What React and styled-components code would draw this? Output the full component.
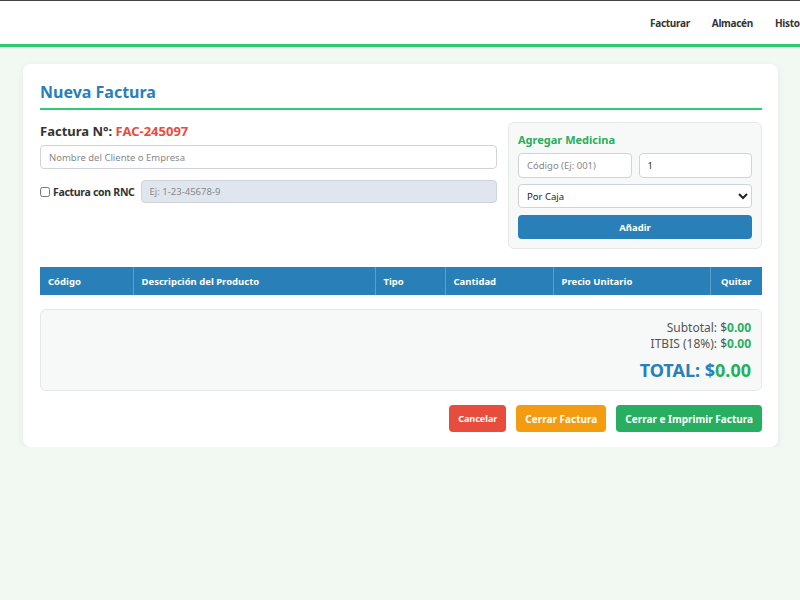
import React from "react";
import styled, { createGlobalStyle } from "styled-components";

const GlobalStyle = createGlobalStyle`
  * { box-sizing: border-box; }
  body {
    margin: 0;
    background: #f2f8f2;
    font-family: "Noto Sans", "Open Sans", sans-serif;
    color: #333;
    overflow-x: hidden;
  }
`;

const Header = styled.header`
  height: 47px;
  background: #fff;
  border-top: 1px solid #444;
  border-bottom: 3px solid #2ecc71;
  display: flex;
  align-items: center;
  overflow: hidden;
`;

const Brand = styled.div`
  flex: 0 0 639px;
`;

const Nav = styled.nav`
  display: flex;
  flex-shrink: 0;
`;

const NavLink = styled.a`
  font-size: 10px;
  font-weight: 700;
  letter-spacing: -0.3px;
  color: #333;
  padding: 0 11px;
  white-space: nowrap;
  text-decoration: none;
`;

const Card = styled.main`
  margin: 17px 22px 0 23px;
  background: #fff;
  border-radius: 8px;
  box-shadow: 0 2px 8px rgba(0, 0, 0, 0.06);
  padding: 17px 16px 15px 17px;
`;

const Title = styled.h2`
  margin: 0;
  color: #2980b9;
  font-size: 16px;
  font-weight: 700;
  padding-bottom: 5px;
  border-bottom: 2px solid #2ecc71;
`;

const TopGrid = styled.div`
  display: grid;
  grid-template-columns: 457px 1fr;
  gap: 11px;
  margin-top: 12px;
`;

const LeftCol = styled.div`
  display: flex;
  flex-direction: column;
`;

const InvoiceNo = styled.div`
  font-size: 13px;
  font-weight: 700;
  color: #333;
  span {
    color: #e74c3c;
  }
`;

const TextInput = styled.input`
  width: 100%;
  height: ${(p) => p.$h || 24}px;
  border: 1px solid #d0d4d8;
  border-radius: 4px;
  padding: 0 8px;
  font-family: inherit;
  font-size: 9.5px;
  color: #333;
  background: ${(p) => (p.disabled ? "#dfe6ee" : "#fff")};
  &::placeholder {
    color: #888;
  }
`;

const ClientInput = styled(TextInput)`
  margin-top: 5px;
`;

const RncRow = styled.div`
  display: flex;
  align-items: center;
  gap: 6px;
  margin-top: 11px;
`;

const CheckLabel = styled.label`
  display: flex;
  align-items: center;
  gap: 3px;
  font-size: 10.5px;
  font-weight: 700;
  white-space: nowrap;
  letter-spacing: -0.3px;
  input {
    margin: 0;
    width: 10px;
    height: 10px;
  }
`;

const Panel = styled.section`
  background: #f7f9f8;
  border: 1px solid #e4e9e6;
  border-radius: 6px;
  padding: 9px 9px 9px 9px;
  display: flex;
  flex-direction: column;
  gap: 6px;
`;

const PanelTitle = styled.h3`
  margin: 0;
  color: #27ae60;
  font-size: 11px;
  font-weight: 700;
`;

const PairRow = styled.div`
  display: grid;
  grid-template-columns: 1fr 1fr;
  gap: 7px;
`;

const Select = styled.select`
  width: 100%;
  height: 24px;
  border: 1px solid #d0d4d8;
  border-radius: 4px;
  padding: 0 4px;
  font-family: inherit;
  font-size: 9.5px;
  color: #222;
  background: #fff;
`;

const Button = styled.button`
  height: ${(p) => p.$h || 27}px;
  width: ${(p) => (p.$full ? "100%" : "auto")};
  padding: 0 9px;
  border: none;
  border-radius: 4px;
  background: ${(p) => p.$bg};
  color: #fff;
  font-family: inherit;
  font-size: ${(p) => p.$fs || 10}px;
  font-weight: 700;
  cursor: pointer;
`;

const AddButton = styled(Button)`
  margin-top: 1px;
`;

const Table = styled.table`
  width: 100%;
  border-collapse: collapse;
  margin-top: 18px;
`;

const Th = styled.th`
  background: #2980b9;
  color: #fff;
  font-size: 9.5px;
  font-weight: 700;
  text-align: left;
  height: 28px;
  padding: 0 8px;
  border-right: 1px solid #5b9fcc;
  &:last-child {
    border-right: none;
    text-align: center;
  }
`;

const TotalsBox = styled.div`
  margin-top: 14px;
  background: #f7f9f8;
  border: 1px solid #e4e9e6;
  border-radius: 6px;
  padding: 10px 10px 8px;
  display: flex;
  flex-direction: column;
  align-items: flex-end;
`;

const TotalLine = styled.div`
  font-size: 12px;
  color: #555;
  line-height: 16px;
  span {
    color: #27ae60;
    font-weight: 700;
  }
`;

const GrandTotal = styled.div`
  margin-top: 6px;
  font-size: 18px;
  font-weight: 700;
  color: #2980b9;
  span {
    color: #27ae60;
  }
`;

const Actions = styled.div`
  display: flex;
  justify-content: flex-end;
  gap: 10px;
  margin-top: 14px;
`;

const columns = [
  { label: "Código", w: 93 },
  { label: "Descripción del Producto", w: 242 },
  { label: "Tipo", w: 70 },
  { label: "Cantidad", w: 108 },
  { label: "Precio Unitario", w: 157 },
  { label: "Quitar", w: 52 },
];

export default function App() {
  return (
    <>
      <GlobalStyle />
      <Header>
        <Brand />
        <Nav>
          <NavLink>Facturar</NavLink>
          <NavLink>Almacén</NavLink>
          <NavLink>Historial</NavLink>
        </Nav>
      </Header>
      <Card>
        <Title>Nueva Factura</Title>
        <TopGrid>
          <LeftCol>
            <InvoiceNo>
              Factura N°: <span>FAC-245097</span>
            </InvoiceNo>
            <ClientInput placeholder="Nombre del Cliente o Empresa" />
            <RncRow>
              <CheckLabel>
                <input type="checkbox" />
                Factura con RNC
              </CheckLabel>
              <TextInput $h={23} disabled placeholder="Ej: 1-23-45678-9" />
            </RncRow>
          </LeftCol>
          <Panel>
            <PanelTitle>Agregar Medicina</PanelTitle>
            <PairRow>
              <TextInput $h={25} placeholder="Código (Ej: 001)" />
              <TextInput $h={25} defaultValue="1" />
            </PairRow>
            <Select defaultValue="caja">
              <option value="caja">Por Caja</option>
              <option value="unidad">Por Unidad</option>
            </Select>
            <AddButton $full $h={24} $bg="#2980b9" $fs={9.5}>
              Añadir
            </AddButton>
          </Panel>
        </TopGrid>
        <Table>
          <thead>
            <tr>
              {columns.map((c) => (
                <Th key={c.label} style={{ width: c.w }}>
                  {c.label}
                </Th>
              ))}
            </tr>
          </thead>
          <tbody />
        </Table>
        <TotalsBox>
          <TotalLine>
            Subtotal: $<span>0.00</span>
          </TotalLine>
          <TotalLine>
            ITBIS (18%): $<span>0.00</span>
          </TotalLine>
          <GrandTotal>
            TOTAL: $<span>0.00</span>
          </GrandTotal>
        </TotalsBox>
        <Actions>
          <Button $bg="#e74c3c" $fs={9}>
            Cancelar
          </Button>
          <Button $bg="#f39c12">Cerrar Factura</Button>
          <Button $bg="#27ae60">Cerrar e Imprimir Factura</Button>
        </Actions>
      </Card>
    </>
  );
}
